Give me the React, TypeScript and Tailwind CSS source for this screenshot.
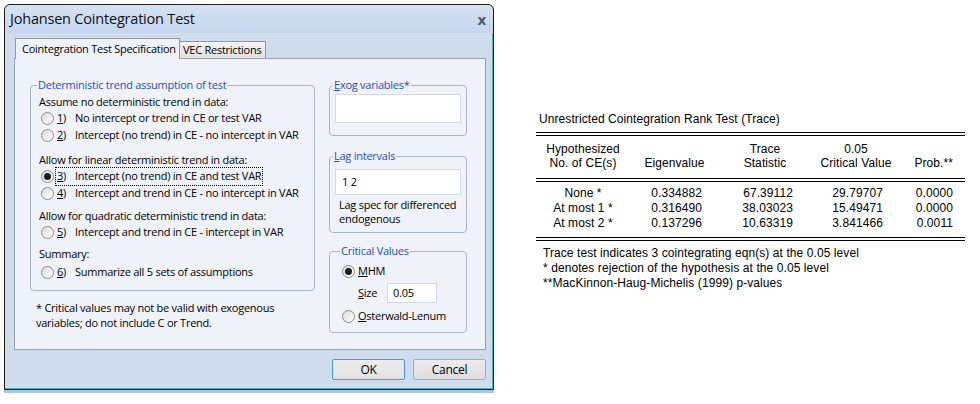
import React from "react";

const dlgFont = "font-['Open_Sans',sans-serif]";

function Radio({ checked }: { checked?: boolean }) {
  return (
    <span className="w-[13px] h-[13px] shrink-0 rounded-full border border-[#8b8b8b] bg-linear-to-br from-[#dcdcdc] to-white flex items-center justify-center">
      {checked && <span className="w-[7px] h-[7px] rounded-full bg-[#1c1c1c]" />}
    </span>
  );
}

function RadioRow({
  n,
  text,
  checked,
  focus,
}: {
  n: string;
  text: string;
  checked?: boolean;
  focus?: boolean;
}) {
  return (
    <div className="flex items-center h-[17px] pl-[2px]">
      <Radio checked={checked} />
      <span
        className={
          focus
            ? "ml-[2px] pl-[1px] pr-[1px] flex items-center outline outline-1 outline-dotted outline-black"
            : "ml-[2px] pl-[1px] pr-[1px] flex items-center"
        }
      >
        <span className="w-[18px] shrink-0">
          <u>{n}</u>)
        </span>
        <span>{text}</span>
      </span>
    </div>
  );
}

function Heading({ children, className = "" }: { children: React.ReactNode; className?: string }) {
  return <div className={"h-[17px] leading-[17px] " + className}>{children}</div>;
}

function GroupLegend({ children }: { children: React.ReactNode }) {
  return (
    <legend className="-ml-[2px] px-[1px] leading-[14px] text-[#1d4fc4]">{children}</legend>
  );
}

function Dialog() {
  return (
    <div
      className={
        "mt-[4px] ml-[4px] w-[490px] h-[386px] shrink-0 border border-[#1b1b1b] rounded-t-[6px] bg-[#cfdcee] flex flex-col shadow-[inset_-1px_-1px_0_#3fb4c2,0_3px_0_#a8c3e8] text-[11px] tracking-[-0.25px] text-black whitespace-nowrap " +
        dlgFont
      }
    >
      {/* title bar */}
      <div className="h-[28px] flex items-center justify-between pl-[5px] pr-[7px] rounded-t-[6px] bg-linear-to-b from-[#d4e2f3] to-[#c5d6ed]">
        <span className="text-[14.5px] tracking-[-0.2px] text-[#111]">Johansen Cointegration Test</span>
        <span className="text-[15px] font-bold text-[#4b5a6e] leading-none">x</span>
      </div>

      {/* tabs */}
      <div className="mt-[5px] pl-[10px] flex items-end h-[20px]">
        <div className="relative z-10 -mb-px h-[21px] w-[165px] border border-b-0 border-[#8e99a8] bg-[#eff3f9] flex items-center pl-[6px]">
          Cointegration Test Specification
        </div>
        <div className="h-[17px] w-[86px] border border-b-0 border-l-0 border-[#8e99a8] bg-linear-to-b from-[#f3f3f3] to-[#e2e2e2] flex items-center pl-[3px]">
          VEC Restrictions
        </div>
      </div>

      {/* panel */}
      <div className="ml-[9px] w-[472px] h-[292px] border border-[#9aa4b1] bg-[#eff3f9] flex pl-[15px] pt-[19px]">
        {/* left column */}
        <div className="w-[285px]">
          <fieldset className="border border-[#aab6c6] rounded-[4px] px-[8px] pb-[9px]">
            <GroupLegend>Deterministic trend assumption of test</GroupLegend>
            <div className="pt-[1px]">
              <Heading>Assume no deterministic trend in data:</Heading>
              <RadioRow n="1" text="No intercept or trend in CE or test VAR" />
              <RadioRow n="2" text="Intercept (no trend) in CE - no intercept in VAR" />
              <Heading className="mt-[7px]">Allow for linear deterministic trend in data:</Heading>
              <RadioRow n="3" text="Intercept (no trend) in CE and test VAR" checked focus />
              <RadioRow n="4" text="Intercept and trend in CE - no intercept in VAR" />
              <Heading className="mt-[5px]">Allow for quadratic deterministic trend in data:</Heading>
              <RadioRow n="5" text="Intercept and trend in CE - intercept in VAR" />
              <Heading className="mt-[4px]">Summary:</Heading>
              <div className="mt-[2px]">
                <RadioRow n="6" text="Summarize all 5 sets of assumptions" />
              </div>
            </div>
          </fieldset>
          <div className="mt-[9px] ml-[6px] leading-[15px]">
            * Critical values may not be valid with exogenous
            <br />
            variables; do not include C or Trend.
          </div>
        </div>

        {/* right column */}
        <div className="ml-[14px] w-[138px]">
          <fieldset className="border border-[#aab6c6] rounded-[4px] px-[5px] pb-[12px]">
            <GroupLegend>
              <u>E</u>xog variables*
            </GroupLegend>
            <div className="mt-[2px] h-[29px] w-[126px] bg-white border border-[#d3dae3]" />
          </fieldset>

          <fieldset className="mt-[13px] border border-[#aab6c6] rounded-[4px] px-[5px] pb-[6px]">
            <GroupLegend>
              <u>L</u>ag intervals
            </GroupLegend>
            <div className="mt-[6px] h-[26px] w-[126px] bg-white border border-[#d3dae3] flex items-center pl-[6px]">
              1 2
            </div>
            <div className="mt-[3px] pl-[4px] leading-[14px]">
              <div>Lag spec for differenced</div>
              <div>endogenous</div>
            </div>
          </fieldset>

          <fieldset className="mt-[11px] border border-[#aab6c6] rounded-[4px] pl-[12px] pr-[5px] pb-[7px]">
            <GroupLegend>Critical Values</GroupLegend>
            <div className="mt-[5px] flex items-center h-[17px]">
              <Radio checked />
              <span className="ml-[3px]">
                <u>M</u>HM
              </span>
            </div>
            <div className="mt-[3px] flex items-center h-[20px] pl-[16px]">
              <span className="w-[29px]">
                <u>S</u>ize
              </span>
              <div className="h-[20px] w-[50px] bg-white border border-[#d3dae3] flex items-center pl-[5px]">
                0.05
              </div>
            </div>
            <div className="mt-[5px] flex items-center h-[17px]">
              <Radio />
              <span className="ml-[3px]">
                <u>O</u>sterwald-Lenum
              </span>
            </div>
          </fieldset>
        </div>
      </div>

      {/* buttons */}
      <div className="mt-[9px] flex justify-end pr-[7px] gap-[8px]">
        <button className="h-[21px] w-[73px] rounded-[2px] border border-[#3d9be9] bg-linear-to-b from-[#ececec] to-[#e2e2e2] text-[12px]">
          OK
        </button>
        <button className="h-[21px] w-[73px] rounded-[2px] border border-[#acacac] bg-linear-to-b from-[#ececec] to-[#dddddd] text-[12px]">
          Cancel
        </button>
      </div>
    </div>
  );
}

const rows = [
  ["None *", "0.334882", "67.39112", "29.79707", "0.0000"],
  ["At most 1 *", "0.316490", "38.03023", "15.49471", "0.0000"],
  ["At most 2 *", "0.137296", "10.63319", "3.841466", "0.0011"],
];

function TraceTable() {
  return (
    <div className="mt-[112px] ml-[42px] w-[429px] font-['Liberation_Sans',Arial,sans-serif] text-[12px] tracking-[0.08px] text-black whitespace-nowrap">
      <div className="pl-[3px] leading-[15px]">Unrestricted Cointegration Rank Test (Trace)</div>
      <div className="mt-[5px] h-[4px] border-y border-black" />

      <div className="mt-[6px] flex leading-[14px]">
        <div className="w-[94px] text-center">
          Hypothesized
          <br />
          No. of CE(s)
        </div>
        <div className="w-[89px] text-center">
          <br />
          Eigenvalue
        </div>
        <div className="w-[92px] text-center">
          Trace
          <br />
          Statistic
        </div>
        <div className="w-[90px] text-center">
          0.05
          <br />
          Critical Value
        </div>
        <div className="w-[64px] text-right pr-[12px]">
          <br />
          Prob.**
        </div>
      </div>

      <div className="mt-[8px] h-[4px] border-y border-black" />

      <div className="mt-[4px]">
        {rows.map((r) => (
          <div key={r[0]} className="flex leading-[15px]">
            <div className="w-[94px] text-center">{r[0]}</div>
            <div className="w-[89px] text-right pr-[17px]">{r[1]}</div>
            <div className="w-[92px] text-right pr-[18px]">{r[2]}</div>
            <div className="w-[90px] text-right pr-[18px]">{r[3]}</div>
            <div className="w-[64px] text-right pr-[12px]">{r[4]}</div>
          </div>
        ))}
      </div>

      <div className="mt-[6px] h-[4px] border-y border-black" />

      <div className="mt-[5px] pl-[7px] leading-[15px]">
        <div>Trace test indicates 3 cointegrating eqn(s) at the 0.05 level</div>
        <div>* denotes rejection of the hypothesis at the 0.05 level</div>
        <div>**MacKinnon-Haug-Michelis (1999) p-values</div>
      </div>
    </div>
  );
}

export default function App() {
  return (
    <div className="w-[980px] h-[404px] bg-white flex items-start overflow-hidden">
      <Dialog />
      <TraceTable />
    </div>
  );
}
